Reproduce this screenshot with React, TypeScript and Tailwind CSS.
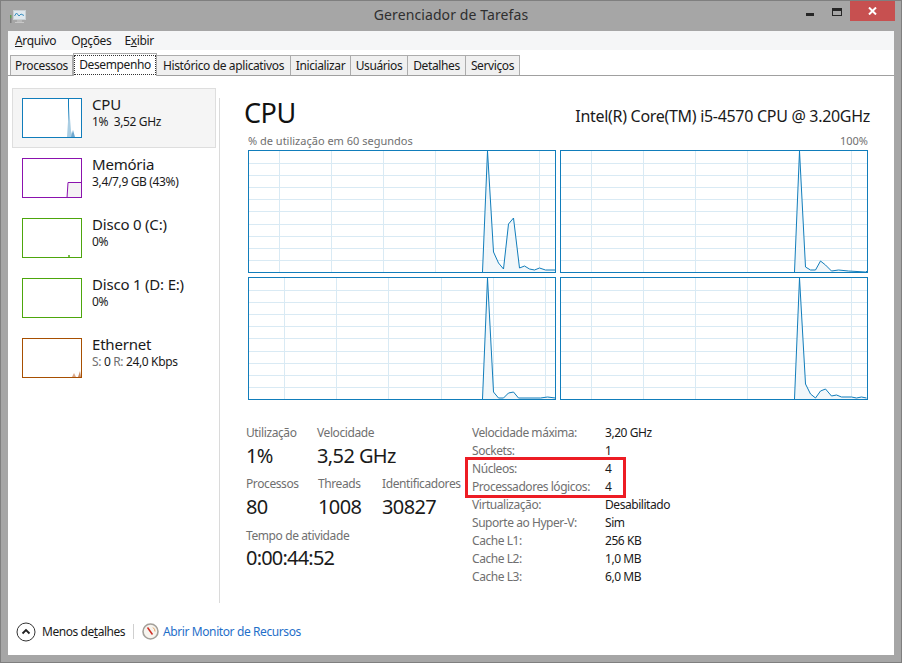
import React from 'react';

type Pt = [number, number];

const COLS_A = [31, 83, 135, 187, 239, 291];
const COLS_B = [36, 88, 140, 193, 245, 297];
const ROWS = [13, 25, 37, 49, 61, 74, 86, 98, 110];

const CORES: { cols: number[]; pts: Pt[] }[] = [
  {
    cols: COLS_A,
    pts: [[234, 122], [239, 1], [245, 102], [250, 113], [255, 119], [260, 74], [265, 68], [271, 118], [276, 116], [281, 119], [286, 120], [291, 118], [297, 120], [307, 120]],
  },
  {
    cols: COLS_A,
    pts: [[234, 122], [239, 1], [245, 117], [250, 120], [255, 120], [260, 111], [265, 115], [271, 121], [278, 120], [288, 121], [305, 122], [307, 121]],
  },
  {
    cols: COLS_B,
    pts: [[234, 122], [239, 1], [245, 115], [250, 121], [255, 121], [260, 116], [265, 115], [270, 121], [292, 121], [299, 120], [307, 121]],
  },
  {
    cols: COLS_A,
    pts: [[234, 122], [239, 1], [245, 107], [250, 117], [255, 121], [260, 114], [265, 112], [271, 119], [276, 118], [281, 120], [291, 120], [296, 121], [301, 120], [306, 121]],
  },
];

const CoreGraph = ({ cols, pts }: { cols: number[]; pts: Pt[] }) => {
  const line = pts.map((p) => p.join(',')).join(' ');
  return (
    <svg width="308" height="123" className="block bg-white">
      {cols.map((x) => (
        <line key={x} x1={x + 0.5} x2={x + 0.5} y1="0" y2="123" stroke="#d9eaf4" />
      ))}
      {ROWS.map((y) => (
        <line key={y} x1="0" x2="308" y1={y + 0.5} y2={y + 0.5} stroke="#d9eaf4" />
      ))}
      <g transform="translate(0.5 0)">
        <polygon points={`${line} 307,122`} fill="#f1f6fa" fillOpacity="0.9" />
        <polyline points={line} fill="none" stroke="#117dbb" strokeWidth="1" />
      </g>
      <rect x="0.5" y="0.5" width="307" height="122" fill="none" stroke="#117dbb" />
    </svg>
  );
};

const Thumb = ({ color, children }: { color: string; children?: React.ReactNode }) => (
  <svg width="60" height="40" className="block shrink-0 bg-white">
    {children}
    <rect x="0.5" y="0.5" width="59" height="39" fill="none" stroke={color} />
  </svg>
);

const SideItem = ({ thumb, title, sub, active }: { thumb: React.ReactNode; title: string; sub: React.ReactNode; active?: boolean }) => (
  <div className={`flex h-[60px] w-[204px] items-center gap-[10px] border pl-[9px] ${active ? 'border-[#dedede] bg-[#f5f5f5]' : 'border-transparent'}`}>
    {thumb}
    <div className="flex flex-col pb-[12px]">
      <span className="h-[20px] text-[15px] leading-[20px] tracking-[-0.2px] text-[#1a1a1a]">{title}</span>
      <span className="h-[16px] whitespace-pre text-[12px] leading-[16px] tracking-[-0.35px] text-[#1a1a1a]">{sub}</span>
    </div>
  </div>
);

const Stat = ({ label, value, className }: { label: string; value: string; className: string }) => (
  <div className={`flex flex-col ${className}`}>
    <span className="h-[17px] text-[12px] leading-[16px] tracking-[-0.4px] text-[#707070]">{label}</span>
    <span className="h-[28px] text-[20px] leading-[28px] tracking-[-0.6px] text-[#1a1a1a]">{value}</span>
  </div>
);

const SPECS = [
  ['Velocidade máxima:', '3,20 GHz'],
  ['Sockets:', '1'],
  ['Núcleos:', '4'],
  ['Processadores lógicos:', '4'],
  ['Virtualização:', 'Desabilitado'],
  ['Suporte ao Hyper-V:', 'Sim'],
  ['Cache L1:', '256 KB'],
  ['Cache L2:', '1,0 MB'],
  ['Cache L3:', '6,0 MB'],
];

const TABS = [
  { name: 'Processos', w: 'w-[63px]' },
  { name: 'Desempenho', w: 'w-[84px]', active: true },
  { name: 'Histórico de aplicativos', w: 'w-[134px]' },
  { name: 'Inicializar', w: 'w-[60px]' },
  { name: 'Usuários', w: 'w-[57px]' },
  { name: 'Detalhes', w: 'w-[58px]' },
  { name: 'Serviços', w: 'w-[54px]' },
];

export default function App() {
  return (
    <div className="flex h-[663px] w-[902px] flex-col overflow-hidden border border-[#7f7f7f] bg-[#a6a6a6] font-['Noto_Sans',sans-serif]">
      {/* title bar */}
      <div className="relative flex h-[30px] shrink-0 items-start">
        <svg width="16" height="15" viewBox="0 0 16 15" className="ml-[9px] mt-[9px]">
          <rect x="3.5" y="0.5" width="12" height="9" fill="#dfe8ee" stroke="#c9d0d4" />
          <polyline points="4.5,6 6.5,3 9,6 11,4 14,5.5" fill="none" stroke="#3a8fc0" />
          <rect x="0" y="5" width="1.5" height="3" fill="#5f9a4f" />
          <rect x="0" y="8" width="1.5" height="5" fill="#7d7d7d" />
          <rect x="7" y="10" width="5" height="2" fill="#b8b8b8" />
          <rect x="5" y="12" width="9" height="1" fill="#c8c8c8" />
        </svg>
        <div className="absolute inset-x-0 top-[4px] text-center text-[14px] leading-[20px] tracking-[0.1px] text-[#2f2f2f]">Gerenciador de Tarefas</div>
        <div className="absolute right-[6px] top-0 flex items-start">
          <div className="mr-[18px] mt-[12px] h-[3px] w-[8px] bg-[#262626]" />
          <div className="mr-[8px] mt-[7px] h-[8px] w-[10px] border border-t-[3px] border-[#262626]" />
          <div className="flex h-[20px] w-[45px] items-center justify-center bg-[#c75050] text-white">
            <svg width="9" height="8" viewBox="0 0 9 8">
              <path d="M1 0.5 L8 7.5 M8 0.5 L1 7.5" stroke="#fff" strokeWidth="2" />
            </svg>
          </div>
        </div>
      </div>

      {/* client area */}
      <div className="mx-[7px] flex h-[624px] flex-col bg-white">
        <div className="flex h-[19px] shrink-0 items-center bg-[#f5f6f7] pl-[7px] text-[12px] tracking-[-0.35px] text-[#1a1a1a]">
          <span><u>A</u>rquivo</span>
          <span className="ml-[15px]">O<u>p</u>ções</span>
          <span className="ml-[13px]">E<u>x</u>ibir</span>
        </div>
        <div className="flex h-[26px] shrink-0 items-end border-b border-[#a0a0a0] pl-[2px] tracking-[-0.38px]">
          {TABS.map((t) =>
            t.active ? (
              <div key={t.name} className={`${t.w} relative -mb-px flex h-[23px] items-center justify-center border border-b-0 border-[#acacac] bg-white text-[12px] text-[#1a1a1a]`}>
                <span className="flex h-[20px] items-center border border-dotted border-[#333] px-[4px]">{t.name}</span>
              </div>
            ) : (
              <div key={t.name} className={`${t.w} flex h-[20px] items-center justify-center border border-b-0 border-l-0 first:border-l border-[#acacac] bg-[#f0f0f0] text-[12px] text-[#1a1a1a]`}>
                {t.name}
              </div>
            ),
          )}
        </div>

        <div className="flex min-h-0 flex-1">
          {/* sidebar */}
          <div className="flex w-[211px] shrink-0 flex-col">
            <div className="ml-[4px] mt-[12px] flex w-[204px] flex-col">
              <SideItem
                active
                title="CPU"
                sub="1%  3,52 GHz"
                thumb={
                  <Thumb color="#117dbb">
                    <line x1="46.5" x2="46.5" y1="0" y2="40" stroke="#117dbb" />
                    <polygon points="45,39 47,8 49,33 51,39" fill="#a9cde3" />
                    <polygon points="49,39 51,32 53,39" fill="#6fa8cf" />
                  </Thumb>
                }
              />
              <SideItem
                title="Memória"
                sub="3,4/7,9 GB (43%)"
                thumb={
                  <Thumb color="#8b12ae">
                    <polygon points="45,40 46,24 60,24 60,40" fill="#f4f2f4" />
                    <polyline points="45,40 46,24.5 60,24.5" fill="none" stroke="#8b12ae" />
                  </Thumb>
                }
              />
              <SideItem
                title="Disco 0 (C:)"
                sub="0%"
                thumb={
                  <Thumb color="#4da60c">
                    <rect x="46" y="37" width="2" height="2" fill="#79bd4a" />
                  </Thumb>
                }
              />
              <SideItem title="Disco 1 (D: E:)" sub="0%" thumb={<Thumb color="#4da60c" />} />
              <SideItem
                title="Ethernet"
                sub={
                  <>
                    <span className="text-[#707070]">S:</span> 0 <span className="text-[#707070]">R:</span> 24,0 Kbps
                  </>
                }
                thumb={
                  <Thumb color="#a74f01">
                    <polygon points="50,39 52,35 54,39" fill="#dca98a" />
                    <polygon points="56,39 58,33 59,39" fill="#c98a62" />
                  </Thumb>
                }
              />
            </div>
          </div>
          <div className="mt-[22px] w-px shrink-0 bg-[#dadada]" />

          {/* main panel */}
          <div className="relative flex min-w-0 flex-1 flex-col pl-[28px] pr-[26px] pt-[18px]">
            <div className="flex h-[36px] items-center justify-between">
              <span className="-ml-[4px] mt-[2px] text-[27px] leading-[36px] tracking-[-0.5px] text-[#111]">CPU</span>
              <span className="-mr-[2px] mt-[8px] text-[16px] tracking-[-0.3px] text-[#1a1a1a]">Intel(R) Core(TM) i5-4570 CPU @ 3.20GHz</span>
            </div>
            <div className="mt-[3px] flex h-[17px] items-start justify-between text-[11px] leading-[16px] text-[#707070]">
              <span>% de utilização em 60 segundos</span>
              <span>100%</span>
            </div>
            <div className="grid w-[620px] grid-cols-[308px_308px] gap-x-[4px] gap-y-[4px]">
              {CORES.map((c, i) => (
                <CoreGraph key={i} cols={c.cols} pts={c.pts} />
              ))}
            </div>

            <div className="mt-[24px] flex">
              <div className="-ml-[2px] flex w-[226px] shrink-0 flex-col pt-[1px]">
                <div className="flex">
                  <Stat label="Utilização" value="1%" className="w-[71px]" />
                  <Stat label="Velocidade" value="3,52 GHz" className="" />
                </div>
                <div className="mt-[6px] flex">
                  <Stat label="Processos" value="80" className="w-[72px]" />
                  <Stat label="Threads" value="1008" className="w-[64px]" />
                  <Stat label="Identificadores" value="30827" className="" />
                </div>
                <div className="mt-[7px] flex flex-col">
                  <span className="h-[16px] text-[12px] leading-[16px] tracking-[-0.4px] text-[#707070]">Tempo de atividade</span>
                  <span className="h-[28px] text-[20px] leading-[28px] tracking-[-0.8px] text-[#1a1a1a]">0:00:44:52</span>
                </div>
              </div>
              <div className="relative grid h-fit grid-cols-[133px_auto] auto-rows-[18px] items-center text-[12px] leading-[16px] tracking-[-0.45px]">
                {SPECS.map(([k, v]) => (
                  <React.Fragment key={k}>
                    <span className="text-[#707070]">{k}</span>
                    <span className="text-[#1a1a1a]">{v}</span>
                  </React.Fragment>
                ))}
                <div className="absolute left-[-7px] top-[33px] h-[41px] w-[161px] border-[3px] border-[#ed1c24]" />
              </div>
            </div>
          </div>
        </div>

        {/* footer */}
        <div className="flex h-[52px] shrink-0 items-center pl-[8px] pt-[5px] text-[12px]">
          <svg width="20" height="20" viewBox="0 0 20 20" className="shrink-0">
            <circle cx="10" cy="10" r="9" fill="#fff" stroke="#333" strokeWidth="1" />
            <path d="M6.5 11.5 L10 8 L13.5 11.5" fill="none" stroke="#222" strokeWidth="1.8" />
          </svg>
          <span className="ml-[6px] w-[91px] tracking-[-0.45px] text-[#1a1a1a]">
            Menos de<u>t</u>alhes
          </span>
          <div className="h-[15px] w-px bg-[#cfcfcf]" />
          <svg width="17" height="17" viewBox="0 0 17 17" className="ml-[8px] shrink-0">
            <circle cx="8.5" cy="8.5" r="7.5" fill="#f7f4ee" stroke="#a3a09a" strokeWidth="1.6" />
            <path d="M5.5 4.5 L10.5 11.5" stroke="#cf2f26" strokeWidth="1.5" />
            <path d="M11 4.5 A5 5 0 0 1 13 8.5" fill="none" stroke="#e5a060" strokeWidth="1" />
          </svg>
          <span className="ml-[4px] tracking-[-0.4px] text-[#1f6fc9]">Abrir Monitor de Recursos</span>
        </div>
      </div>
    </div>
  );
}
